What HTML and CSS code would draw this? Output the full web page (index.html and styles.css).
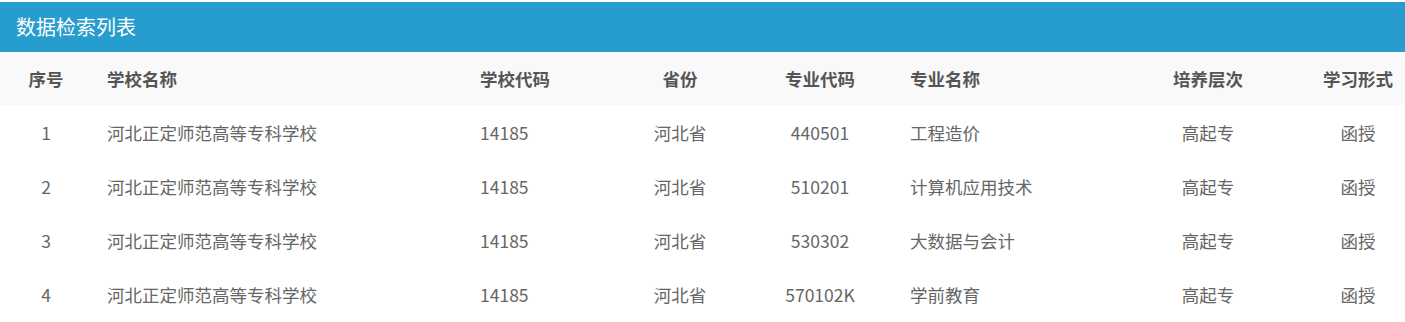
FILE: index.html
```html
<!DOCTYPE html>
<html lang="zh-CN">
<head>
<meta charset="utf-8">
<title>数据检索列表</title>
<link rel="stylesheet" href="styles.css">
</head>
<body>
<div class="panel">
  <div class="panel-title">数据检索列表</div>
  <div class="grid">
    <div class="row head">
      <div class="c">序号</div><div class="l">学校名称</div><div class="l">学校代码</div><div class="c">省份</div><div class="c">专业代码</div><div class="l">专业名称</div><div class="c">培养层次</div><div class="c">学习形式</div>
    </div>
    <div class="row">
      <div class="c">1</div><div class="l">河北正定师范高等专科学校</div><div class="l">14185</div><div class="c">河北省</div><div class="c">440501</div><div class="l">工程造价</div><div class="c">高起专</div><div class="c">函授</div>
    </div>
    <div class="row">
      <div class="c">2</div><div class="l">河北正定师范高等专科学校</div><div class="l">14185</div><div class="c">河北省</div><div class="c">510201</div><div class="l">计算机应用技术</div><div class="c">高起专</div><div class="c">函授</div>
    </div>
    <div class="row">
      <div class="c">3</div><div class="l">河北正定师范高等专科学校</div><div class="l">14185</div><div class="c">河北省</div><div class="c">530302</div><div class="l">大数据与会计</div><div class="c">高起专</div><div class="c">函授</div>
    </div>
    <div class="row">
      <div class="c">4</div><div class="l">河北正定师范高等专科学校</div><div class="l">14185</div><div class="c">河北省</div><div class="c">570102K</div><div class="l">学前教育</div><div class="c">高起专</div><div class="c">函授</div>
    </div>
  </div>
</div>
</body>
</html>
```

FILE: styles.css
```css
html, body {
  margin: 0;
  padding: 0;
  background: #ffffff;
}
body {
  font-family: "Noto Sans CJK SC", "Noto Sans", sans-serif;
  padding-top: 2px;
}
.panel-title {
  background: #279cce;
  color: #ffffff;
  font-size: 20px;
  height: 50px;
  line-height: 50px;
  padding-left: 16px;
}
.row {
  display: grid;
  grid-template-columns: 92px 373px 150px 130px 150px 210px 206px 94px;
  height: 54px;
  align-items: center;
  font-size: 17.5px;
  color: #666666;
}
.row.head {
  height: 53px;
  background: #f9f9f9;
  color: #555555;
  font-weight: bold;
}
.c {
  text-align: center;
}
.l {
  text-align: left;
  padding-left: 15px;
}
```
